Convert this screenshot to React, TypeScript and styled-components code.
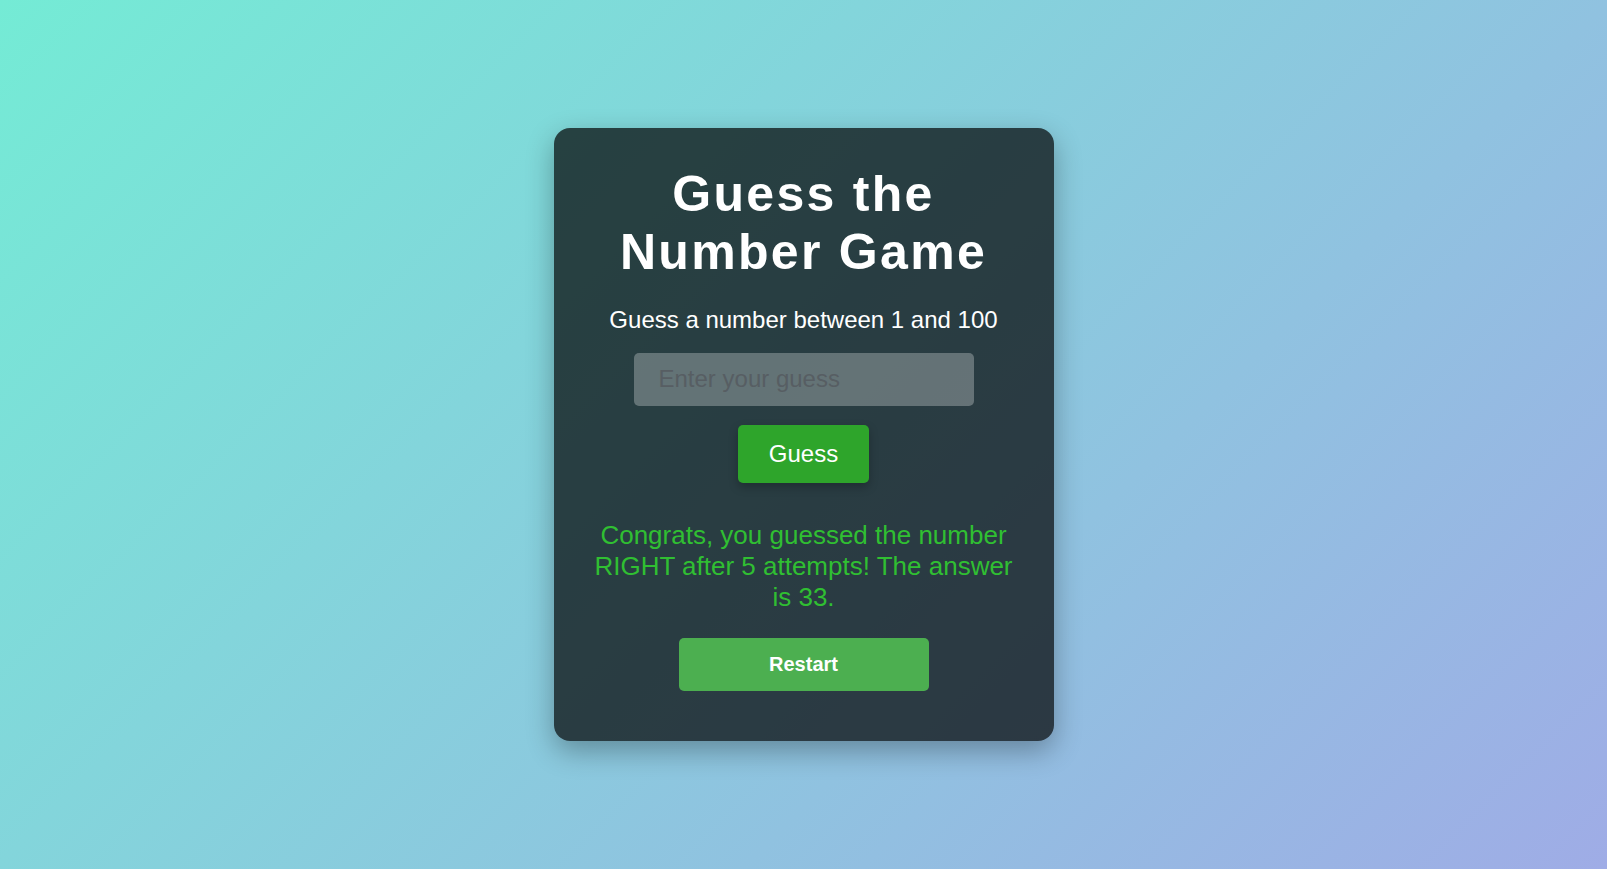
import React, { useState } from "react";
import styled, { createGlobalStyle } from "styled-components";

const GlobalStyle = createGlobalStyle`
  html, body {
    margin: 0;
    padding: 0;
    height: 100%;
  }
  body {
    font-family: "Liberation Sans", Arial, sans-serif;
    background: linear-gradient(135deg, #74ebd5, #9face6);
  }
  #root {
    min-height: 100vh;
  }
`;

const Page = styled.div`
  min-height: 100vh;
  display: flex;
  align-items: center;
  justify-content: center;
`;

const Card = styled.div`
  width: 500px;
  box-sizing: border-box;
  padding: 37px 40px 50px;
  background: rgba(0, 0, 0, 0.7);
  border-radius: 16px;
  box-shadow: 0 10px 28px rgba(0, 0, 0, 0.3);
  display: flex;
  flex-direction: column;
  align-items: center;
  text-align: center;
  color: #fff;
`;

const Title = styled.h1`
  margin: 0;
  font-size: 50px;
  line-height: 58px;
  font-weight: 700;
  letter-spacing: 2.3px;
`;

const Subtitle = styled.p`
  margin: 25px 0 0;
  font-size: 24px;
  line-height: 27.6px;
`;

const GuessInput = styled.input`
  margin-top: 19px;
  width: 340px;
  height: 53px;
  box-sizing: border-box;
  padding: 0 25px;
  border: none;
  border-radius: 5px;
  outline: none;
  background: rgba(255, 255, 255, 0.28);
  color: #fff;
  font-family: inherit;
  font-size: 24px;

  &::placeholder {
    color: #575e63;
  }
`;

const Button = styled.button<{ $tone: "guess" | "restart" }>`
  border: none;
  border-radius: 5px;
  color: #fff;
  cursor: pointer;
  font-family: inherit;
  background: ${(p) => (p.$tone === "guess" ? "#2ea52b" : "#4caf50")};
  font-size: ${(p) => (p.$tone === "guess" ? "24px" : "20px")};
  font-weight: ${(p) => (p.$tone === "guess" ? 400 : 700)};
  width: ${(p) => (p.$tone === "guess" ? "131px" : "250px")};
  height: ${(p) => (p.$tone === "guess" ? "58px" : "53px")};
  margin-top: ${(p) => (p.$tone === "guess" ? "19px" : "25px")};
  box-shadow: ${(p) =>
    p.$tone === "guess" ? "0 4px 10px rgba(0, 0, 0, 0.25)" : "none"};
`;

const Message = styled.p`
  margin: 37px 0 0;
  font-size: 26px;
  line-height: 31px;
  color: #30bf32;
`;

export default function App() {
  const [value, setValue] = useState("");
  return (
    <>
      <GlobalStyle />
      <Page>
        <Card>
          <Title>Guess the Number Game</Title>
          <Subtitle>Guess a number between 1 and 100</Subtitle>
          <GuessInput
            type="number"
            placeholder="Enter your guess"
            value={value}
            onChange={(e) => setValue(e.target.value)}
          />
          <Button $tone="guess">Guess</Button>
          <Message>
            Congrats, you guessed the number RIGHT after 5 attempts! The answer
            is 33.
          </Message>
          <Button $tone="restart">Restart</Button>
        </Card>
      </Page>
    </>
  );
}
